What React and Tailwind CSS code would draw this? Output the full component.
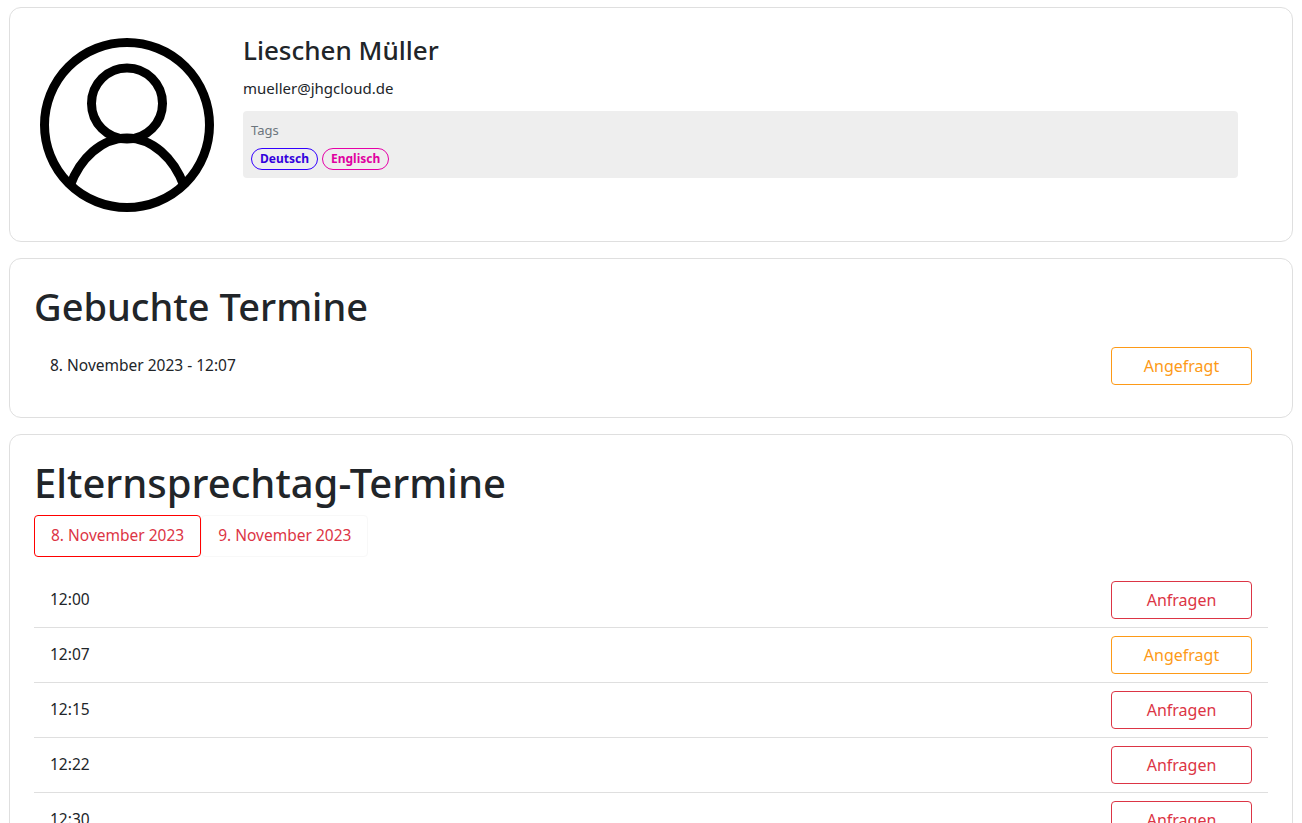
const font = "font-['Noto_Sans','Open_Sans',sans-serif]";

const slots = [
  { time: "12:00", status: "Anfragen" },
  { time: "12:07", status: "Angefragt" },
  { time: "12:15", status: "Anfragen" },
  { time: "12:22", status: "Anfragen" },
  { time: "12:30", status: "Anfragen" },
];

function StatusButton({ status }) {
  const color =
    status === "Angefragt"
      ? "border-[#fd9a17] text-[#fd9a17]"
      : "border-[#dc3545] text-[#dc3545]";
  return (
    <button
      className={`w-[141px] h-[38px] shrink-0 rounded border bg-white text-[16px] ${color}`}
    >
      {status}
    </button>
  );
}

function Avatar() {
  return (
    <svg width="174" height="174" viewBox="0 0 174 174" fill="none" stroke="#000" strokeWidth="9">
      <circle cx="87" cy="87" r="82.5" />
      <circle cx="87" cy="65.5" r="35.5" />
      <path d="M30 148 C40 120 62 100 87 100 C112 100 134 120 144 148" />
    </svg>
  );
}

export default function App() {
  return (
    <div className={`h-[823px] overflow-hidden bg-white px-[9px] pt-[7px] text-[#212529] ${font}`}>
      <div className="flex flex-col gap-4">
        {/* Profil */}
        <section className="flex h-[235px] gap-[17px] rounded-xl border border-[#dfdfdf] px-[30px] pt-[30px]">
          <div className="w-[186px] shrink-0">
            <Avatar />
          </div>
          <div className="flex-1 pr-[24px]">
            <h2 className="text-[26px] font-medium leading-[31px] mt-[-3px]">Lieschen Müller</h2>
            <p className="mt-[10px] text-[15px] leading-[24px]">mueller@jhgcloud.de</p>
            <div className="mt-[11px] h-[67px] rounded bg-[#eeeeee] px-2 pt-[10px]">
              <p className="text-[13px] leading-[18px] text-[#6c757d]">Tags</p>
              <div className="mt-[9px] flex gap-1">
                <span className="flex h-[22px] items-center rounded-full border border-[#3300ff] px-2 text-[12px] font-bold text-[#3300dd]">
                  Deutsch
                </span>
                <span className="flex h-[22px] items-center rounded-full border border-[#e600a8] px-2 text-[12px] font-bold text-[#e000a0]">
                  Englisch
                </span>
              </div>
            </div>
          </div>
        </section>

        {/* Gebuchte Termine */}
        <section className="h-[160px] rounded-xl border border-[#dfdfdf] px-6 pt-[24px]">
          <h1 className="text-[38px] font-medium leading-[46px]">Gebuchte Termine</h1>
          <div className="mt-[18px] flex items-center justify-between px-4">
            <span className="text-[15.5px]">8. November 2023 - 12:07</span>
            <StatusButton status="Angefragt" />
          </div>
        </section>

        {/* Elternsprechtag */}
        <section className="rounded-xl border border-[#dfdfdf] px-6 pt-[24px]">
          <h1 className="text-[40px] font-medium leading-[48px]">Elternsprechtag-Termine</h1>
          <div className="mt-[8px] flex">
            <button className="h-[42px] rounded border border-[#ff0000] px-4 text-[15.5px] text-[#dc3545]">
              8. November 2023
            </button>
            <button className="h-[42px] rounded border border-[#f8f8f8] px-4 text-[15.5px] text-[#dc3545]">
              9. November 2023
            </button>
          </div>
          <div className="mt-[16px]">
            {slots.map((s) => (
              <div
                key={s.time}
                className="flex h-[55px] items-center justify-between border-b border-[#dfdfdf] px-4 pb-px text-[15.5px]"
              >
                <span>{s.time}</span>
                <StatusButton status={s.status} />
              </div>
            ))}
          </div>
        </section>
      </div>
    </div>
  );
}
